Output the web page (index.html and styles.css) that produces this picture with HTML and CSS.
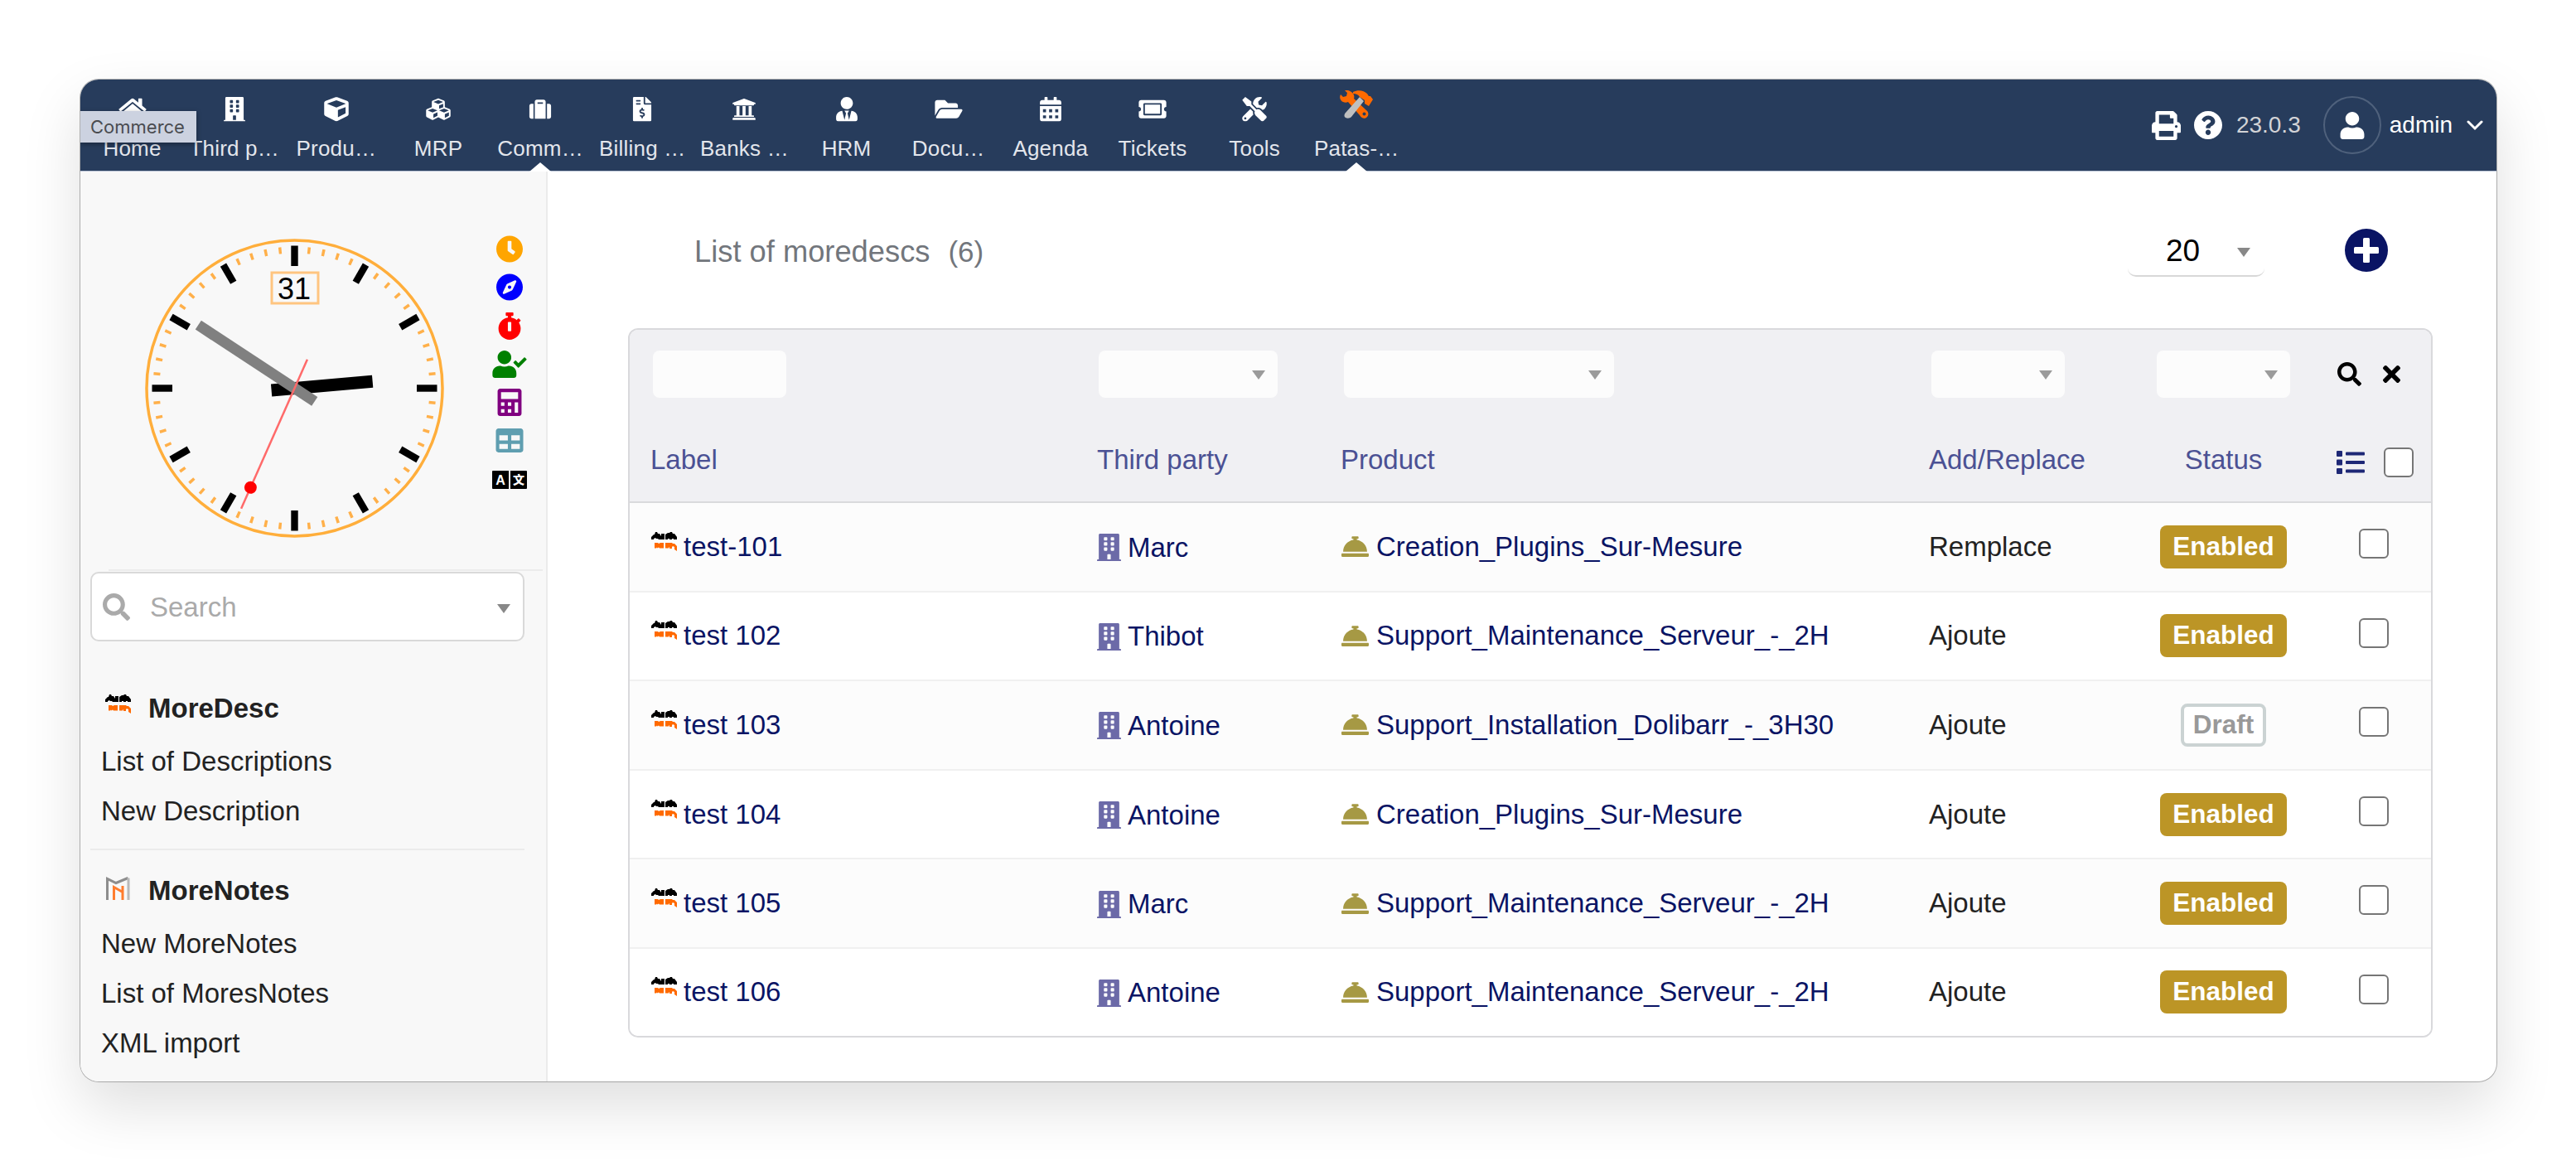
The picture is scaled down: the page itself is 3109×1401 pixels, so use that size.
FILE: index.html
```html
<!DOCTYPE html>
<html lang="en">
<head>
    <meta charset="UTF-8">
    <meta name="viewport" content="width=device-width, initial-scale=1.0">
    <title>List of moredescs</title>
    <link rel="stylesheet" href="styles.css">
</head>
<body>
    <svg class="sprite" xmlns="http://www.w3.org/2000/svg">
        <symbol id="home" viewBox="0 0 576 512"><path d="M280.37 148.26L96 300.11V464a16 16 0 0 0 16 16l112.06-.29a16 16 0 0 0 15.92-16V368a16 16 0 0 1 16-16h64a16 16 0 0 1 16 16v95.64a16 16 0 0 0 16 16.05L464 480a16 16 0 0 0 16-16V300L295.67 148.26a12.19 12.19 0 0 0-15.3 0zM571.6 251.47L488 182.56V44.05a12 12 0 0 0-12-12h-56a12 12 0 0 0-12 12v72.61L318.47 43a48 48 0 0 0-61 0L4.34 251.47a12 12 0 0 0-1.6 16.9l25.5 31A12 12 0 0 0 45.15 301l235.22-193.74a12.19 12.19 0 0 1 15.3 0L530.9 301a12 12 0 0 0 16.9-1.6l25.5-31a12 12 0 0 0-1.7-16.93z"/></symbol>
        <symbol id="building" viewBox="0 0 448 512"><path d="M436 480h-20V24c0-13.255-10.745-24-24-24H56C42.745 0 32 10.745 32 24v456H12c-6.627 0-12 5.373-12 12v20h448v-20c0-6.627-5.373-12-12-12zM128 76c0-6.627 5.373-12 12-12h40c6.627 0 12 5.373 12 12v40c0 6.627-5.373 12-12 12h-40c-6.627 0-12-5.373-12-12V76zm0 96c0-6.627 5.373-12 12-12h40c6.627 0 12 5.373 12 12v40c0 6.627-5.373 12-12 12h-40c-6.627 0-12-5.373-12-12v-40zm52 148h-40c-6.627 0-12-5.373-12-12v-40c0-6.627 5.373-12 12-12h40c6.627 0 12 5.373 12 12v40c0 6.627-5.373 12-12 12zm76 160h-64v-84c0-6.627 5.373-12 12-12h40c6.627 0 12 5.373 12 12v84zm64-172c0 6.627-5.373 12-12 12h-40c-6.627 0-12-5.373-12-12v-40c0-6.627 5.373-12 12-12h40c6.627 0 12 5.373 12 12v40zm0-96c0 6.627-5.373 12-12 12h-40c-6.627 0-12-5.373-12-12v-40c0-6.627 5.373-12 12-12h40c6.627 0 12 5.373 12 12v40zm0-96c0 6.627-5.373 12-12 12h-40c-6.627 0-12-5.373-12-12V76c0-6.627 5.373-12 12-12h40c6.627 0 12 5.373 12 12v40z"/></symbol>
        <symbol id="cube" viewBox="0 0 512 512"><path d="M239.1 6.3l-208 78c-18.7 7-31.1 25-31.1 45v225.1c0 18.2 10.3 34.8 26.5 42.9l208 104c13.5 6.8 29.4 6.8 42.9 0l208-104c16.3-8.1 26.5-24.8 26.5-42.9V129.3c0-20-12.4-37.9-31.1-44.9l-208-78C262 2.2 250 2.2 239.1 6.3zM256 68.4l192 72v1.1l-192 78-192-78v-1.1l192-72zm32 356V275.5l160-65v133.9l-160 80z"/></symbol>
        <symbol id="cubes" viewBox="0 0 512 512"><path d="M488.6 250.2L392 214V105.5c0-15-9.3-28.4-23.4-33.7l-100-37.5c-8.1-3.1-17.1-3.1-25.3 0l-100 37.5c-14.1 5.3-23.4 18.7-23.4 33.7V214l-96.6 36.2C9.3 255.5 0 268.9 0 283.9V394c0 13.6 7.7 26.1 19.9 32.2l100 50c10.1 5.1 22.1 5.1 32.2 0l103.9-52 103.9 52c10.1 5.1 22.1 5.1 32.2 0l100-50c12.2-6.1 19.9-18.6 19.9-32.2V283.9c0-15-9.3-28.4-23.4-33.7zM358 214.8l-85 31.9v-68.2l85-37v73.3zM154 104.1l102-38.2 102 38.2v.6l-102 41.4-102-41.4v-.6zm84 291.1l-85 42.5v-79.1l85-38.8v75.4zm0-112l-102 41.4-102-41.4v-.6l102-38.2 102 38.2v.6zm240 112l-85 42.5v-79.1l85-38.8v75.4zm0-112l-102 41.4-102-41.4v-.6l102-38.2 102 38.2v.6z"/></symbol>
        <symbol id="suitcase" viewBox="0 -32 512 577"><path d="M128 480h256V80c0-26.5-21.5-48-48-48H176c-26.5 0-48 21.5-48 48v400zm64-384h128v32H192V96zm320 80v256c0 26.5-21.5 48-48 48h-48V128h48c26.5 0 48 21.5 48 48zM96 480H48c-26.5 0-48-21.5-48-48V176c0-26.5 21.5-48 48-48h48v352z"/></symbol>
        <symbol id="invoice" viewBox="0 0 384 512"><path d="M377 105L279.1 7c-4.5-4.5-10.6-7-17-7H256v128h128v-6.1c0-6.3-2.5-12.4-7-16.9zm-153 31V0H24C10.7 0 0 10.7 0 24v464c0 13.3 10.7 24 24 24h336c13.3 0 24-10.7 24-24V160H248c-13.2 0-24-10.8-24-24zM64 72c0-4.42 3.58-8 8-8h80c4.42 0 8 3.58 8 8v16c0 4.42-3.58 8-8 8H72c-4.42 0-8-3.58-8-8V72zm0 80v-16c0-4.42 3.58-8 8-8h80c4.42 0 8 3.58 8 8v16c0 4.42-3.58 8-8 8H72c-4.42 0-8-3.58-8-8zm144 263.88V440c0 4.42-3.58 8-8 8h-16c-4.42 0-8-3.58-8-8v-24.29c-11.29-.58-22.27-4.52-31.37-11.35-3.9-2.93-4.1-8.77-.57-12.14l11.75-11.21c2.77-2.64 6.89-2.76 10.13-.73 3.87 2.42 8.26 3.72 12.82 3.72h28.11c6.5 0 11.8-5.92 11.8-13.19 0-5.95-3.61-11.19-8.77-12.73l-45-13.5c-18.59-5.58-31.58-23.42-31.58-43.39 0-24.52 19.05-44.44 42.67-45.07V232c0-4.42 3.58-8 8-8h16c4.42 0 8 3.58 8 8v24.29c11.29.58 22.27 4.51 31.37 11.35 3.9 2.93 4.1 8.77.57 12.14l-11.75 11.21c-2.77 2.64-6.89 2.76-10.13.73-3.87-2.43-8.26-3.72-12.82-3.72h-28.11c-6.5 0-11.8 5.92-11.8 13.19 0 5.95 3.61 11.19 8.77 12.73l45 13.5c18.59 5.58 31.58 23.42 31.58 43.39 0 24.53-19.05 44.44-42.67 45.07z"/></symbol>
        <symbol id="bank" viewBox="0 0 512 512"><path d="M496 128v16a8 8 0 0 1-8 8h-24v12c0 6.627-5.373 12-12 12H60c-6.627 0-12-5.373-12-12v-12H24a8 8 0 0 1-8-8v-16a8 8 0 0 1 4.941-7.392l232-88a7.996 7.996 0 0 1 6.118 0l232 88A8 8 0 0 1 496 128zm-24 304H40c-13.255 0-24 10.745-24 24v16a8 8 0 0 0 8 8h464a8 8 0 0 0 8-8v-16c0-13.255-10.745-24-24-24zM96 192v192H60c-6.627 0-12 5.373-12 12v20h416v-20c0-6.627-5.373-12-12-12h-36V192h-64v192h-64V192h-64v192h-64V192H96z"/></symbol>
        <symbol id="user-tie" viewBox="0 0 448 512"><path d="M224 256c70.7 0 128-57.3 128-128S294.7 0 224 0 96 57.3 96 128s57.3 128 128 128zm95.8 32.6L272 480l-32-136 32-56h-96l32 56-32 136-47.8-191.4C56.9 292 0 350.3 0 422.4V464c0 26.5 21.5 48 48 48h352c26.5 0 48-21.5 48-48v-41.6c0-72.1-56.9-130.4-128.2-133.8z"/></symbol>
        <symbol id="folder" viewBox="0 0 576 512"><path d="M572.694 292.093L500.27 416.248A63.997 63.997 0 0 1 444.989 448H45.025c-18.523 0-30.064-20.093-20.731-36.093l72.424-124.155A64 64 0 0 1 152 256h399.964c18.523 0 30.064 20.093 20.73 36.093zM152 224h328v-48c0-26.51-21.49-48-48-48H272l-64-64H48C21.49 64 0 85.49 0 112v278.046l69.077-118.418C86.214 242.25 117.989 224 152 224z"/></symbol>
        <symbol id="calendar" viewBox="0 0 448 512"><path fill-rule="evenodd" d="M400 64h-48V16c0-8.8-7.2-16-16-16h-32c-8.8 0-16 7.2-16 16v48H160V16c0-8.8-7.2-16-16-16h-32c-8.8 0-16 7.2-16 16v48H48C21.5 64 0 85.5 0 112v48h448v-48c0-26.5-21.5-48-48-48zM0 192v272c0 26.5 21.5 48 48 48h352c26.5 0 48-21.5 48-48V192zM64 256h64v64H64zM192 256h64v64h-64zM320 256h64v64h-64zM64 384h64v64H64zM192 384h64v64h-64zM320 384h64v64h-64z"/></symbol>
        <symbol id="ticket" viewBox="0 0 576 512"><path d="M128 160h320v192H128V160zm400 96c0 26.51 21.49 48 48 48v96c0 26.51-21.49 48-48 48H48c-26.51 0-48-21.49-48-48v-96c26.51 0 48-21.49 48-48s-21.49-48-48-48v-96c0-26.51 21.49-48 48-48h480c26.51 0 48 21.49 48 48v96c-26.51 0-48 21.49-48 48zm-48-104c0-13.255-10.745-24-24-24H120c-13.255 0-24 10.745-24 24v208c0 13.255 10.745 24 24 24h336c13.255 0 24-10.745 24-24V152z"/></symbol>
        <symbol id="tools" viewBox="0 0 512 512"><path d="M501.1 395.7L384 278.6c-23.1-23.1-57.6-27.6-85.4-13.9L192 158.1V96L64 0 0 64l96 128h62.1l106.6 106.6c-13.6 27.8-9.2 62.3 13.9 85.4l117.1 117.1c14.6 14.6 38.2 14.6 52.7 0l52.7-52.7c14.5-14.6 14.5-38.2 0-52.7zM331.7 225c28.3 0 54.9 11 74.9 31l19.4 19.4c15.8-6.9 30.8-16.5 43.8-29.5 37.1-37.1 49.7-89.3 37.9-136.7-2.2-9-13.5-12.1-20.1-5.5l-74.4 74.4-67.9-11.3L334 98.9l74.4-74.4c6.6-6.6 3.4-17.9-5.7-20.2-47.4-11.7-99.6.9-136.6 37.9-28.5 28.5-41.9 66.1-41.2 103.6l82.1 82.1c8.1-1.9 16.5-2.9 24.7-2.9zm-103.9 82l-56.7-56.7L18.7 402.8c-25 25-25 65.5 0 90.5s65.5 25 90.5 0l123.6-123.6c-7.6-19.9-9.9-41.6-5-62.7zM64 472c-13.2 0-24-10.8-24-24 0-13.3 10.7-24 24-24s24 10.7 24 24c0 13.2-10.7 24-24 24z"/></symbol>
        <symbol id="patas" viewBox="0 0 40 34">
            <path fill="#ff6a00" d="M6 0l3 3-1 4-4 1-3-3c-2 4 0 8 3 9 2 1 4 1 6 0l14 16c2 4 7 5 9 2 2-2 2-6-1-8L17 10c1-3 0-6-3-8-3-2-6-3-8-2z"/>
            <circle fill="#273c5c" cx="29.5" cy="28.5" r="2"/>
            <path fill="#bfbfbf" d="M24 8l5 5L14 32c-2 2-5 2-7 1s-2-4 0-6z"/>
            <path fill="#ff6a00" d="M16 2c6-3 13-2 17 2l2 3h2l3 4-5 8-5-3v-4l-6-4c-2-3-4-4-8-4z"/>
        </symbol>
        <symbol id="print" viewBox="0 0 512 512"><path d="M448 192V77.25c0-8.49-3.37-16.62-9.37-22.63L393.37 9.37c-6-6-14.14-9.37-22.63-9.37H96C78.33 0 64 14.33 64 32v160c-35.35 0-64 28.65-64 64v112c0 8.84 7.16 16 16 16h48v96c0 17.67 14.33 32 32 32h320c17.67 0 32-14.33 32-32v-96h48c8.84 0 16-7.16 16-16V256c0-35.35-28.65-64-64-64zm-64 256H128v-96h256v96zm0-224H128V64h192v48c0 8.84 7.16 16 16 16h48v96zm48 72c-13.25 0-24-10.75-24-24 0-13.26 10.75-24 24-24s24 10.74 24 24c0 13.25-10.75 24-24 24z"/></symbol>
        <symbol id="question" viewBox="8 8 496 496"><path d="M504 256c0 136.997-111.043 248-248 248S8 392.997 8 256C8 119.083 119.043 8 256 8s248 111.083 248 248zM262.655 90c-54.497 0-89.255 22.957-116.549 63.758-3.536 5.286-2.353 12.415 2.715 16.258l34.699 26.31c5.205 3.947 12.621 3.008 16.665-2.122 17.864-22.658 30.113-35.797 57.303-35.797 20.429 0 45.698 13.148 45.698 32.958 0 14.976-12.363 22.667-32.534 33.976C247.128 238.528 216 254.941 216 296v4c0 6.627 5.373 12 12 12h56c6.627 0 12-5.373 12-12v-1.333c0-28.462 83.186-29.647 83.186-106.667 0-58.002-60.165-102-116.531-102zM256 338c-25.365 0-46 20.635-46 46 0 25.364 20.635 46 46 46s46-20.636 46-46c0-25.365-20.635-46-46-46z"/></symbol>
        <symbol id="user" viewBox="0 0 448 512"><path d="M224 256c70.7 0 128-57.3 128-128S294.7 0 224 0 96 57.3 96 128s57.3 128 128 128zm89.6 32h-16.7c-22.2 10.2-46.9 16-72.9 16s-50.6-5.8-72.9-16h-16.7C60.2 288 0 348.2 0 422.4V464c0 26.5 21.5 48 48 48h352c26.5 0 48-21.5 48-48v-41.6c0-74.2-60.2-134.4-134.4-134.4z"/></symbol>
        <symbol id="plus-circle" viewBox="0 0 52 52"><circle cx="26" cy="26" r="26"/><rect fill="#fff" x="22" y="11" width="8" height="30" rx="1.5"/><rect fill="#fff" x="11" y="22" width="30" height="8" rx="1.5"/></symbol>
        <symbol id="clock" viewBox="0 0 512 512"><path d="M256 8C119 8 8 119 8 256s111 248 248 248 248-111 248-248S393 8 256 8zm57.1 350.1L224.9 294c-3.1-2.3-4.9-5.9-4.9-9.7V116c0-6.6 5.4-12 12-12h48c6.6 0 12 5.4 12 12v137.7l63.5 46.2c5.4 3.9 6.5 11.4 2.6 16.8l-28.2 38.8c-3.9 5.3-11.4 6.5-16.8 2.6z"/></symbol>
        <symbol id="compass" viewBox="-8 0 512 512"><path d="M225.38 233.37c-12.5 12.5-12.5 32.76 0 45.25 12.49 12.5 32.76 12.5 45.25 0 12.5-12.5 12.5-32.76 0-45.25-12.5-12.49-32.76-12.49-45.25 0zM248 8C111.03 8 0 119.03 0 256s111.03 248 248 248 248-111.03 248-248S384.97 8 248 8zm126.14 148.05L308.17 300.4a31.938 31.938 0 0 1-15.77 15.77l-144.34 65.97c-16.65 7.61-33.81-9.55-26.2-26.2l65.98-144.35a31.938 31.938 0 0 1 15.77-15.77l144.34-65.97c16.65-7.6 33.8 9.55 26.19 26.2z"/></symbol>
        <symbol id="stopwatch" viewBox="0 0 448 512"><path d="M432 304c0 114.9-93.1 208-208 208S16 418.9 16 304c0-104 76.3-190.2 176-205.5V64h-28c-6.6 0-12-5.4-12-12V12c0-6.6 5.4-12 12-12h120c6.6 0 12 5.4 12 12v40c0 6.6-5.4 12-12 12h-28v34.5c37.5 5.8 71.7 21.6 99.7 44.6l27.5-27.5c4.7-4.7 12.3-4.7 17 0l28.3 28.3c4.7 4.7 4.7 12.3 0 17l-30 30C419.7 223.3 432 262.2 432 304zm-176 36V188.5c0-6.6-5.4-12-12-12h-40c-6.6 0-12 5.4-12 12V340c0 6.6 5.4 12 12 12h40c6.6 0 12-5.4 12-12z"/></symbol>
        <symbol id="user-check" viewBox="0 0 640 512"><path d="M224 256c70.7 0 128-57.3 128-128S294.7 0 224 0 96 57.3 96 128s57.3 128 128 128zm89.6 32h-16.7c-22.2 10.2-46.9 16-72.9 16s-50.6-5.8-72.9-16h-16.7C60.2 288 0 348.2 0 422.4V464c0 26.5 21.5 48 48 48h352c26.5 0 48-21.5 48-48v-41.6c0-74.2-60.2-134.4-134.4-134.4zM636.6 159.6l-28.2-28.5c-4.5-4.6-12-4.6-16.6 0L485.6 236.3l-46-46.3c-4.6-4.6-12-4.6-16.6-.1l-28.4 28.1c-4.6 4.6-4.6 12-.1 16.6l82.6 83.2c4.6 4.6 12 4.6 16.6.1l142.7-141.7c4.6-4.6 4.6-12.1.2-16.6z"/></symbol>
        <symbol id="calculator" viewBox="0 0 448 512"><path fill-rule="evenodd" d="M400 0H48C22.4 0 0 22.4 0 48v416c0 25.6 22.4 48 48 48h352c25.6 0 48-22.4 48-48V48c0-25.6-22.4-48-48-48zM64 64h320v128H64zM64 256h64v64H64zM192 256h64v64h-64zM320 256h64v192h-64zM64 384h64v64H64zM192 384h64v64h-64z"/></symbol>
        <symbol id="table" viewBox="0 0 512 512"><path d="M464 32H48C21.49 32 0 53.49 0 80v352c0 26.51 21.49 48 48 48h416c26.51 0 48-21.49 48-48V80c0-26.51-21.49-48-48-48zM224 416H64v-96h160v96zm0-160H64v-96h160v96zm224 160H288v-96h160v96zm0-160H288v-96h160v96z"/></symbol>
        <symbol id="bell" viewBox="0 0 512 512"><path d="M288 130.54V112h16c8.84 0 16-7.16 16-16V80c0-8.84-7.16-16-16-16h-96c-8.84 0-16 7.16-16 16v16c0 8.84 7.16 16 16 16h16v18.54C115.49 146.11 32 239.18 32 352h448c0-112.82-83.49-205.89-192-221.46zM496 384H16c-8.84 0-16 7.16-16 16v32c0 8.84 7.16 16 16 16h480c8.84 0 16-7.16 16-16v-32c0-8.84-7.16-16-16-16z"/></symbol>
        <symbol id="search" viewBox="0 0 512 512"><path d="M505 442.7L405.3 343c-4.5-4.5-10.6-7-17-7H372c27.6-35.3 44-79.7 44-128C416 93.1 322.9 0 208 0S0 93.1 0 208s93.1 208 208 208c48.3 0 92.7-16.4 128-44v16.3c0 6.4 2.5 12.5 7 17l99.7 99.7c9.4 9.4 24.6 9.4 33.9 0l28.3-28.3c9.4-9.4 9.4-24.6.1-34zM208 336c-70.7 0-128-57.2-128-128 0-70.7 57.2-128 128-128 70.7 0 128 57.2 128 128 0 70.7-57.2 128-128 128z"/></symbol>
        <symbol id="times" viewBox="0 80 352 352"><path d="M242.72 256l100.07-100.07c12.28-12.28 12.28-32.19 0-44.48l-22.24-22.24c-12.28-12.28-32.19-12.28-44.48 0L176 189.28 75.93 89.21c-12.28-12.28-32.19-12.28-44.48 0L9.21 111.45c-12.28 12.28-12.28 32.19 0 44.48L109.28 256 9.21 356.07c-12.28 12.28-12.28 32.19 0 44.48l22.24 22.24c12.28 12.28 32.2 12.28 44.48 0L176 322.72l100.07 100.07c12.28 12.28 32.2 12.28 44.48 0l22.24-22.24c12.28-12.28 12.28-32.19 0-44.48L242.72 256z"/></symbol>
        <symbol id="list" viewBox="0 0 34 28">
            <rect width="7" height="7" rx="1"/><rect y="10.5" width="7" height="7" rx="1"/><rect y="21" width="7" height="7" rx="1"/>
            <rect x="11" y="1.5" width="23" height="4" rx="1"/><rect x="11" y="12" width="23" height="4" rx="1"/><rect x="11" y="22.5" width="23" height="4" rx="1"/>
        </symbol>
        <symbol id="moredesc" viewBox="0 0 31 23">
            <path fill="#000" d="M0 9V6l3-3h1l1-3h2l1 2h2l2 3V2h4v7H9L8 8H6L5 7 3 8v1zM17 9V3l3-2h2l1-1h2l1 2h2l3 4v3h-4V8h-2v1h-3V8h-2v1z"/>
            <path fill="#ff6a00" d="M4 19.500V13h4l1 1 2-1h4v6.500h-5l-1-1-2 1H7l-1-1v1zM17 19.500V13h8l1 1h2l3 3v6l-3-2v-3l-2-1-1 1v2h-3v-2l-1 1v.500z"/>
        </symbol>
        <symbol id="morenotes" viewBox="0 0 31 29">
            <path fill="none" stroke="#8d8d8d" stroke-width="3" d="M2.5 28V2.5L13 7.5l14.5-6"/>
            <path fill="none" stroke="#b9b9b9" stroke-width="3" d="M28 1.5V28"/>
            <path fill="none" stroke="#ff7d2e" stroke-width="3" d="M10.5 28V12.5l10.5 6M21 11v17"/>
        </symbol>
    </svg>

    <div class="window">
        <header class="topbar">
            <nav class="menu">
                <a class="menu-item"><svg><use href="#home"/></svg><span>Home</span></a>
                <a class="menu-item"><svg><use href="#building"/></svg><span>Third p…</span></a>
                <a class="menu-item"><svg><use href="#cube"/></svg><span>Produ…</span></a>
                <a class="menu-item"><svg><use href="#cubes"/></svg><span>MRP</span></a>
                <a class="menu-item active"><svg><use href="#suitcase"/></svg><span>Comm…</span></a>
                <a class="menu-item"><svg><use href="#invoice"/></svg><span>Billing …</span></a>
                <a class="menu-item"><svg><use href="#bank"/></svg><span>Banks …</span></a>
                <a class="menu-item"><svg><use href="#user-tie"/></svg><span>HRM</span></a>
                <a class="menu-item"><svg><use href="#folder"/></svg><span>Docu…</span></a>
                <a class="menu-item"><svg><use href="#calendar"/></svg><span>Agenda</span></a>
                <a class="menu-item"><svg><use href="#ticket"/></svg><span>Tickets</span></a>
                <a class="menu-item"><svg><use href="#tools"/></svg><span>Tools</span></a>
                <a class="menu-item custom active"><svg><use href="#patas"/></svg><span>Patas-…</span></a>
            </nav>
            <div class="login">
                <svg class="login-print"><use href="#print"/></svg>
                <svg class="login-help"><use href="#question"/></svg>
                <span class="version">23.0.3</span>
                <span class="avatar"><svg><use href="#user"/></svg></span>
                <span class="username">admin</span>
                <svg class="chevron" viewBox="0 0 20 14"><path d="M2 3l8 8 8-8"/></svg>
            </div>
            <div class="tooltip">Commerce</div>
        </header>

        <div class="layout">
            <aside class="sidebar">
                <div class="widgets">
                    <svg class="dial" viewBox="-180.5 -180.5 361 361">
                        <circle class="dial-ring" r="178.5"/>
                        <circle class="dial-minutes" r="167" pathLength="600"/>
                        <g id="hourTicks"></g>
                        <rect class="dial-box" x="-27.5" y="-139.5" width="56" height="37"/>
                        <text class="dial-date" x="-.5" y="-108">31</text>
                        <rect x="-28" y="-7.5" width="122.5" height="15" transform="rotate(-5)"/>
                        <rect class="dial-minute-hand" x="-29" y="-6.5" width="168" height="13" transform="rotate(213.3)"/>
                        <g transform="rotate(23.9)">
                            <path class="dial-second" d="M0-38V159"/>
                            <circle class="dial-dot" cy="131" r="7.5"/>
                        </g>
                    </svg>
                    <div class="shortcuts">
                        <svg class="orange"><use href="#clock"/></svg>
                        <svg class="blue"><use href="#compass"/></svg>
                        <svg class="red"><use href="#stopwatch"/></svg>
                        <svg class="green"><use href="#user-check"/></svg>
                        <svg class="purple"><use href="#calculator"/></svg>
                        <svg class="teal"><use href="#table"/></svg>
                        <svg class="lang" viewBox="0 0 42 33">
                            <path d="M1 6h19v22H1a1 1 0 0 1-1-1V7a1 1 0 0 1 1-1zM22 6h19a1 1 0 0 1 1 1v20a1 1 0 0 1-1 1H22z"/>
                            <text x="10" y="22.5">A</text>
                            <text class="han" x="32" y="22">文</text>
                        </svg>
                    </div>
                </div>
                <div class="searchbox">
                    <svg><use href="#search"/></svg>
                    <span>Search</span>
                    <i class="arrow"></i>
                </div>
                <div class="block">
                    <div class="block-title"><svg class="ico-desc"><use href="#moredesc"/></svg>MoreDesc</div>
                    <a>List of Descriptions</a>
                    <a>New Description</a>
                </div>
                <div class="block">
                    <div class="block-title"><svg class="ico-notes"><use href="#morenotes"/></svg>MoreNotes</div>
                    <a>New MoreNotes</a>
                    <a>List of MoresNotes</a>
                    <a>XML import</a>
                </div>
            </aside>

            <main class="content">
                <div class="titlebar">
                    <h1>List of moredescs</h1>
                    <span class="count">(6)</span>
                    <div class="limit">20<i class="arrow"></i></div>
                    <svg class="add"><use href="#plus-circle"/></svg>
                </div>

                <div class="table-wrap">
                    <table>
                        <colgroup>
                            <col class="c-label"><col class="c-party"><col class="c-product"><col class="c-mode"><col class="c-status"><col>
                        </colgroup>
                        <thead>
                            <tr class="filters">
                                <td><div class="field field-label"></div></td>
                                <td><div class="field field-party"><i class="arrow"></i></div></td>
                                <td><div class="field field-product"><i class="arrow"></i></div></td>
                                <td><div class="field field-mode"><i class="arrow"></i></div></td>
                                <td><div class="field field-status"><i class="arrow"></i></div></td>
                                <td><div class="actions"><svg class="do-search"><use href="#search"/></svg><svg class="do-clear"><use href="#times"/></svg></div></td>
                            </tr>
                            <tr class="titles">
                                <th>Label</th>
                                <th>Third party</th>
                                <th>Product</th>
                                <th>Add/Replace</th>
                                <th class="center">Status</th>
                                <th><div class="actions"><svg class="do-list"><use href="#list"/></svg><i class="check"></i></div></th>
                            </tr>
                        </thead>
                        <tbody id="rows"></tbody>
                    </table>
                </div>
            </main>
        </div>
    </div>

    <script>
        const rows = [
            ['test-101', 'Marc', 'Creation_Plugins_Sur-Mesure', 'Remplace', 'Enabled'],
            ['test 102', 'Thibot', 'Support_Maintenance_Serveur_-_2H', 'Ajoute', 'Enabled'],
            ['test 103', 'Antoine', 'Support_Installation_Dolibarr_-_3H30', 'Ajoute', 'Draft'],
            ['test 104', 'Antoine', 'Creation_Plugins_Sur-Mesure', 'Ajoute', 'Enabled'],
            ['test 105', 'Marc', 'Support_Maintenance_Serveur_-_2H', 'Ajoute', 'Enabled'],
            ['test 106', 'Antoine', 'Support_Maintenance_Serveur_-_2H', 'Ajoute', 'Enabled']
        ];

        document.getElementById('rows').innerHTML = rows.map(([label, party, product, mode, status]) => `
            <tr>
                <td><a class="ref"><svg class="ico-desc"><use href="#moredesc"/></svg>${label}</a></td>
                <td><a class="ref ref-party"><svg class="ico-party"><use href="#building"/></svg>${party}</a></td>
                <td><a class="ref"><svg class="ico-product"><use href="#bell"/></svg>${product}</a></td>
                <td>${mode}</td>
                <td class="center"><span class="badge ${status.toLowerCase()}">${status}</span></td>
                <td class="center"><i class="check"></i></td>
            </tr>`).join('');

        // one thick mark every 30 degrees
        let ticks = '';
        for (let a = 0; a < 360; a += 30) {
            ticks += `<rect x="-4.2" y="-172" width="8.4" height="24.5" transform="rotate(${a})"/>`;
        }
        document.getElementById('hourTicks').innerHTML = ticks;
    </script>
</body>
</html>
```

FILE: styles.css
```css
* {
    box-sizing: border-box;
}

body {
    display: flow-root;
    height: 1401px;
    margin: 0;
    background-color: #fff;
    font-family: "Liberation Sans", Arial, sans-serif;
    font-size: 33px;
    color: #222;
}

svg {
    display: block;
    flex: none;
    fill: currentColor;
}

.sprite {
    display: none;
}

.window {
    width: 2916px;
    height: 1209px;
    margin: 96px 0 0 97px;
    border-radius: 22px;
    overflow: hidden;
    background-color: #fff;
    box-shadow: 0 0 0 1px rgba(0, 0, 0, 0.28), 0 30px 70px rgba(0, 0, 0, 0.13);
}

/* top bar */
.topbar {
    position: relative;
    display: flex;
    justify-content: space-between;
    height: 111px;
    background-color: #273c5c;
    border-bottom: 1px solid #bcc5d6;
}

.menu {
    display: flex;
    padding-left: 1px;
}

.menu-item {
    position: relative;
    display: flex;
    flex-direction: column;
    align-items: center;
    width: 123.15px;
    padding-top: 21px;
    color: #fff;
}

.menu-item svg {
    width: 40px;
    height: 29.5px;
}

.menu-item span {
    margin-top: 15.5px;
    font-size: 26px;
    line-height: 34px;
    letter-spacing: 0.2px;
    color: #e3e6ec;
    white-space: nowrap;
}

.menu-item.custom svg {
    height: 34px;
    margin-top: -8px;
    margin-bottom: 3.5px;
}

.menu-item.active::after {
    content: "";
    position: absolute;
    bottom: -1px;
    left: 50%;
    margin-left: -13px;
    border: 13px solid transparent;
    border-top: 0;
    border-bottom: 11px solid #fff;
}

.login {
    display: flex;
    align-items: center;
    padding-right: 16px;
    font-size: 28px;
    color: #fff;
}

.login-print {
    width: 35px;
    height: 35px;
    margin-right: 16px;
}

.login-help {
    width: 34px;
    height: 34px;
    margin-right: 17px;
}

.version {
    margin-right: 27px;
    color: #d2d3d6;
}

.avatar {
    display: flex;
    align-items: center;
    justify-content: center;
    width: 70px;
    height: 70px;
    margin-right: 10px;
    border: 2px solid #4f617c;
    border-radius: 50%;
}

.avatar svg {
    width: 30px;
    height: 33px;
}

.username {
    margin-right: 17px;
}

.chevron {
    width: 20px;
    height: 14px;
    fill: none;
    stroke: #fff;
    stroke-width: 3;
    stroke-linecap: round;
}

.tooltip {
    position: absolute;
    top: 38px;
    left: 0;
    width: 140px;
    height: 38px;
    padding-left: 12px;
    background-color: #ccd2e0;
    box-shadow: 0 2px 6px rgba(0, 0, 0, 0.35);
    font-family: Inter, sans-serif;
    font-size: 22px;
    line-height: 38px;
    color: #4a4c50;
}

.layout {
    display: flex;
    height: 1098px;
}

/* left column */
.sidebar {
    width: 564px;
    background-color: #f8f8f8;
    border-right: 2px solid #ebebeb;
}

.widgets {
    display: flex;
    width: 524px;
    height: 482px;
    margin-left: 34px;
    padding-left: 44px;
    border-bottom: 2px solid #ececec;
}

.dial {
    width: 361px;
    height: 361px;
    margin-top: 80.5px;
    fill: #000;
}

.dial-ring {
    fill: none;
    stroke: #ffae3b;
    stroke-width: 3.5;
}

/* 60 dashes round the ring, the first one centred on 3 o'clock */
.dial-minutes {
    fill: none;
    stroke: #ffb04a;
    stroke-width: 8;
    stroke-dasharray: 2 8;
    stroke-dashoffset: 1;
}

.dial-box {
    fill: none;
    stroke: #ffc580;
    stroke-width: 3;
}

.dial-date {
    font-size: 36px;
    text-anchor: middle;
}

.dial-minute-hand {
    fill: #808080;
}

.dial-second {
    stroke: #ff6a6a;
    stroke-width: 2.5;
}

.dial-dot {
    fill: #f00;
}

.shortcuts {
    display: flex;
    flex-direction: column;
    gap: 13.3px;
    margin: 77px 0 0 58px;
}

.shortcuts svg {
    width: 42px;
    height: 33px;
}

.orange { color: #ffa500; }
.blue { color: #00f; }
.red { color: #f00; }
.green { color: #008000; }
.purple { color: #800080; }
.teal { color: #5f9eb0; }
.lang { color: #000; }

.lang text {
    fill: #fff;
    font-size: 16px;
    font-weight: bold;
    text-anchor: middle;
}

.lang .han {
    font-family: "Noto Sans CJK SC", sans-serif;
    font-size: 14px;
    font-weight: 900;
}

.arrow {
    border: 8px solid transparent;
    border-top: 11px solid #888;
    border-bottom: 0;
}

.searchbox {
    display: flex;
    align-items: center;
    width: 524px;
    height: 84px;
    margin: 1px 0 51px 12px;
    padding: 0 15px 0 13px;
    background-color: #fff;
    border: 2px solid #d9d9d9;
    border-radius: 10px;
    color: #aaa;
}

.searchbox svg {
    width: 33px;
    height: 33px;
    margin-right: 24px;
}

.searchbox span {
    margin-top: 1px;
}

.searchbox .arrow {
    margin: 4px 0 0 auto;
}

.block {
    width: 524px;
    margin-left: 12px;
    padding: 0 0 15px 13px;
    line-height: 60px;
}

.block + .block {
    border-top: 2px solid #ebebeb;
    padding-top: 19px;
}

.block a {
    display: block;
}

.block-title {
    display: flex;
    align-items: center;
    height: 60px;
    margin-bottom: 4px;
    padding-left: 5px;
    font-weight: bold;
}

.ico-desc {
    width: 31px;
    height: 23px;
    margin-bottom: 12px;
}

.ico-notes {
    width: 31px;
    height: 29px;
    margin-bottom: 6px;
}

.block-title svg {
    margin-right: 21px;
}

/* list page */
.content {
    width: 2352px;
    padding: 0 77px 0 97px;
}

.titlebar {
    display: flex;
    align-items: center;
    height: 189px;
    padding: 1px 54px 0 80px;
}

h1 {
    margin: 3px 22px 0 0;
    font-size: 36.3px;
    font-weight: normal;
    color: #72767c;
}

.count {
    margin-top: 3px;
    font-size: 35px;
    color: #72767c;
}

.limit {
    display: flex;
    align-items: center;
    justify-content: space-between;
    width: 165px;
    height: 62px;
    margin: 2px 97px 0 auto;
    padding: 1px 17px 0 46px;
    border-bottom: 2px solid #d8d8d8;
    border-radius: 10px;
    font-size: 37px;
    color: #000;
}

.limit .arrow {
    margin-top: 3px;
}

.add {
    width: 52px;
    height: 52px;
    color: #0a1464;
}

.table-wrap {
    height: 856px;
    border: 2px solid #d9d9dc;
    border-radius: 12px;
    overflow: hidden;
}

table {
    width: 2174px;
    table-layout: fixed;
    border-spacing: 0;
}

.c-label { width: 540px; }
.c-party { width: 294px; }
.c-product { width: 710px; }
.c-mode { width: 273px; }
.c-status { width: 213px; }

td,
th {
    padding: 0 0 0 24px;
    font-weight: normal;
    text-align: left;
    white-space: nowrap;
}

thead {
    background-color: #f0f0f3;
}

.filters td {
    height: 107px;
}

.titles th {
    height: 102px;
    border-bottom: 2px solid #d9dadc;
    color: #4b5194;
}

.titles th:first-child {
    padding-left: 25px;
}

td.center,
th.center {
    padding-left: 0;
    text-align: center;
}

.field {
    display: flex;
    align-items: center;
    justify-content: flex-end;
    height: 57px;
    padding: 0 15px 0 0;
    background-color: #fcfcfc;
    border-radius: 8px;
}

.field .arrow {
    margin-top: 2px;
    border-top-color: #9b9b9b;
}

.field-label {
    width: 161px;
    margin-left: 4px;
}

.field-party {
    width: 216px;
    margin-left: 2px;
}

.field-product {
    width: 326px;
    margin-left: 4px;
}

.field-mode {
    width: 161px;
    margin-left: 3px;
}

.field-status {
    width: 161px;
    margin-left: 2px;
}

.actions {
    display: flex;
    align-items: center;
    margin-left: 6px;
}

.do-search {
    width: 29px;
    height: 29px;
    margin: 0 26px 0 1px;
    color: #000;
}

.do-clear {
    width: 21px;
    height: 21px;
    color: #000;
}

.titles .actions {
    margin-top: 6px;
}

.do-list {
    width: 34px;
    height: 28px;
    margin-right: 23px;
    color: #1e2876;
}

.check {
    display: inline-block;
    width: 36px;
    height: 36px;
    background-color: #fff;
    border: 2.5px solid #767676;
    border-radius: 6px;
}

tbody td {
    height: 107.6px;
    border-bottom: 2px solid #f0f0f0;
    background-color: #fff;
}

tbody tr:nth-child(odd) td {
    background-color: #fcfcfc;
}

tbody tr:last-child td {
    height: 105px;
    border-bottom: 0;
}

tbody .check {
    margin: -12px 0 0 6px;
    vertical-align: middle;
}

.ref {
    display: flex;
    align-items: center;
    color: #0a1464;
}

.ref .ico-desc {
    margin: 0 8px 13px 2px;
}

.ref-party {
    padding-top: 2px;
}

.ico-party {
    width: 29px;
    height: 33px;
    margin-right: 8px;
    color: #6c6aa8;
}

.ico-product {
    width: 33px;
    height: 33px;
    margin: 0 9px 0 1px;
    color: #a69944;
}

.badge {
    display: inline-block;
    height: 52px;
    padding: 0 15px;
    border-radius: 8px;
    font-size: 31.5px;
    font-weight: bold;
    line-height: 51px;
    vertical-align: middle;
}

.enabled {
    background-color: #bc9526;
    color: #fff;
}

.draft {
    padding: 0 11px;
    border: 4px solid #cbd3d3;
    background-color: #fff;
    line-height: 43px;
    color: #999;
}
```
